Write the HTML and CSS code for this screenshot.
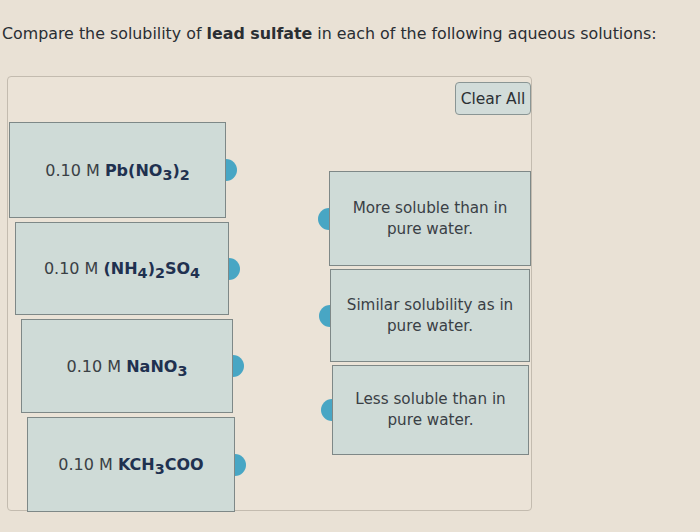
FILE: index.html
```html
<!DOCTYPE html>
<html lang="en">
<head>
  <meta charset="UTF-8" />
  <title>Solubility</title>
  <link rel="stylesheet" href="styles.css">
</head>
<body>
  <p class="prompt">Compare the solubility of <strong>lead sulfate</strong> in each of the following aqueous solutions:</p>

  <div class="board">
    <div class="sources">
      <div class="card source"><span>0.10 M <b>Pb(NO<sub>3</sub>)<sub>2</sub></b></span></div>
      <div class="card source"><span>0.10 M <b>(NH<sub>4</sub>)<sub>2</sub>SO<sub>4</sub></b></span></div>
      <div class="card source"><span>0.10 M <b>NaNO<sub>3</sub></b></span></div>
      <div class="card source"><span>0.10 M <b>KCH<sub>3</sub>COO</b></span></div>
    </div>

    <div class="targets">
      <button class="clear">Clear All</button>
      <div class="card target"><span>More soluble than in<br>pure water.</span></div>
      <div class="card target"><span>Similar solubility as in<br>pure water.</span></div>
      <div class="card target"><span>Less soluble than in<br>pure water.</span></div>
    </div>
  </div>
</body>
</html>
```

FILE: styles.css
```css
body {
  margin: 0;
  font-family: 'DejaVu Sans', Verdana, sans-serif;
  background-color: #e9e1d5;
  color: #2c3034;
  height: 532px;
  overflow: hidden;
}
.prompt {
  margin: 24px 0 0 2px;
  font-size: 15.85px;
  line-height: 20px;
  color: #2a2e33;
}
.board {
  margin: 32px 0 0 7px;
  width: 525px;
  height: 435px;
  box-sizing: border-box;
  border: 1px solid #c3bbaf;
  border-radius: 4px;
  background-color: #ebe3d7;
  display: flex;
  justify-content: space-between;
}
.sources {
  padding-top: 45px;
  padding-left: 1px;
  display: flex;
  flex-direction: column;
  gap: 4px;
}
.targets {
  display: flex;
  flex-direction: column;
  align-items: flex-end;
  gap: 3px;
}
.card {
  flex-shrink: 0;
  position: relative;
  box-sizing: border-box;
  background-color: #cfdbd7;
  border: 1px solid #7e8887;
  color: #3a4045;
  font-size: 15.2px;
  display: flex;
  align-items: center;
  justify-content: center;
  text-align: center;
}
.card b {
  color: #1f3150;
}
.card sub {
  font-size: 0.9em;
  vertical-align: -0.3em;
  line-height: 0;
}
.source {
  font-size: 16px;
  width: 217px;
  height: 96px;
}
.source:nth-child(2) { margin-left: 6px; width: 214px; height: 93px; }
.source:nth-child(3) { margin-left: 12px; width: 212px; height: 94px; }
.source:nth-child(4) { margin-left: 18px; width: 208px; height: 95px; }
.source::after {
  content: "";
  position: absolute;
  right: -12px;
  top: calc(50% - 11px);
  width: 11px;
  height: 22px;
  border-radius: 0 11px 11px 0;
  background-color: #48a6c4;
}
.target {
  width: 202px;
  height: 95px;
  line-height: 21px;
}
.target:nth-of-type(2) { height: 93px; width: 200px; margin-right: 1px; }
.target:nth-of-type(3) { height: 90px; width: 197px; margin-right: 2px; }
.target::before {
  content: "";
  position: absolute;
  left: -12px;
  top: calc(50% - 11px);
  width: 11px;
  height: 22px;
  border-radius: 11px 0 0 11px;
  background-color: #48a6c4;
}
.clear {
  flex-shrink: 0;
  margin: 5px 0 53px;
  width: 76px;
  height: 33px;
  font-family: inherit;
  font-size: 15.5px;
  color: #2c3034;
  background-color: #d2dcd9;
  border: 1px solid #8a9594;
  border-radius: 4px;
  padding: 0;
}
```
